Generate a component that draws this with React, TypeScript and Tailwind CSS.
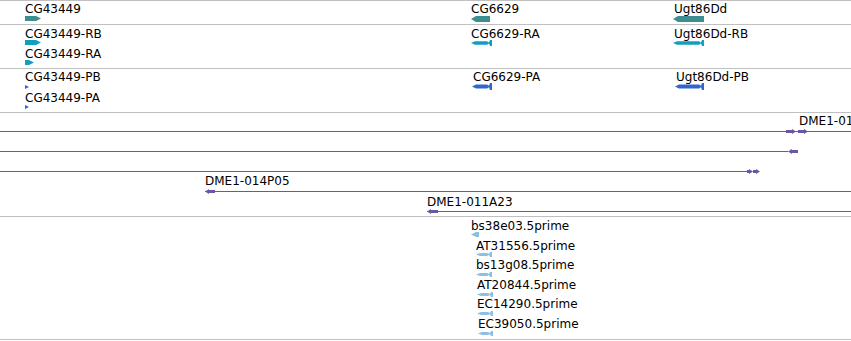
import React from 'react';

type Shape = 'right' | 'left' | 'fish' | 'flag' | 'wedge' | 'boxRight' | 'boxLeft' | 'double';

type Glyph = { shape: Shape; x: number; y: number; w: number; h: number; color: string };
type Label = { text: string; x: number; y: number };
type Span = { x: number; y: number; w: number };

type Track = {
  className: string;
  labels: Label[];
  glyphs: Glyph[];
  spans?: Span[];
};

const GENE = '#3d8e90';
const MRNA = '#0fa0bf';
const CDS = '#3366cc';
const EST = '#8cbfe0';
const CLONE = '#6c56a8';

// polygon outlines for the feature glyphs, in the glyph's own box
function points(shape: Shape, w: number, h: number): string[] {
  const m = h / 2;
  switch (shape) {
    case 'right':
      return [`0,0 ${w - 5},0 ${w},${m} ${w - 5},${h} 0,${h}`];
    case 'left':
      return [`0,${m} 5,0 ${w},0 ${w},${h} 5,${h}`];
    case 'flag':
      return [`0,0 ${w},${m} 0,${h}`];
    case 'wedge':
      return [`0,${m} ${w - 3},0 ${w},0 ${w},${h} ${w - 3},${h}`];
    case 'fish': {
      const t = h * 0.2;
      const b = h * 0.8;
      return [
        `0,${m} 4,${t} ${w - 5},${t} ${w - 3},${h * 0.4} ${w - 2},0 ${w},0 ${w},${h} ${w - 2},${h} ${w - 3},${h * 0.6} ${w - 5},${b} 4,${b}`,
      ];
    }
    case 'boxRight':
      return [`0,1 ${w - 4},1 ${w - 4},0 ${w},${m} ${w - 4},${h} ${w - 4},${h - 1} 0,${h - 1}`];
    case 'boxLeft':
      return [`${w},1 4,1 4,0 0,${m} 4,${h} 4,${h - 1} ${w},${h - 1}`];
    case 'double': {
      const half = Math.floor(w / 2);
      return [
        `0,1 ${half - 4},1 ${half - 4},0 ${half},${m} ${half - 4},${h} ${half - 4},${h - 1} 0,${h - 1}`,
        `${half},1 ${w - 4},1 ${w - 4},0 ${w},${m} ${w - 4},${h} ${w - 4},${h - 1} ${half},${h - 1}`,
      ];
    }
  }
}

function FeatureGlyph({ g }: { g: Glyph }) {
  return (
    <svg
      width={g.w}
      height={g.h}
      viewBox={`0 0 ${g.w} ${g.h}`}
      className="absolute block"
      style={{ left: g.x, top: g.y }}
    >
      {points(g.shape, g.w, g.h).map((p, i) => (
        <polygon key={i} points={p} fill={g.color} />
      ))}
    </svg>
  );
}

const tracks: Track[] = [
  {
    className: 'h-[24px]',
    labels: [
      { text: 'CG43449', x: 25, y: 1 },
      { text: 'CG6629', x: 471, y: 1 },
      { text: 'Ugt86Dd', x: 674, y: 1 },
    ],
    glyphs: [
      { shape: 'right', x: 25, y: 15, w: 16, h: 5, color: GENE },
      { shape: 'left', x: 471, y: 15, w: 19, h: 6, color: GENE },
      { shape: 'left', x: 673, y: 15, w: 31, h: 6, color: GENE },
    ],
  },
  {
    className: 'h-[44px]',
    labels: [
      { text: 'CG43449-RB', x: 25, y: 2 },
      { text: 'CG43449-RA', x: 25, y: 22 },
      { text: 'CG6629-RA', x: 471, y: 2 },
      { text: 'Ugt86Dd-RB', x: 674, y: 2 },
    ],
    glyphs: [
      { shape: 'right', x: 25, y: 15, w: 16, h: 5, color: MRNA },
      { shape: 'right', x: 25, y: 35, w: 9, h: 5, color: MRNA },
      { shape: 'fish', x: 471, y: 15, w: 21, h: 6, color: MRNA },
      { shape: 'fish', x: 673, y: 15, w: 31, h: 6, color: MRNA },
    ],
  },
  {
    className: 'h-[44px]',
    labels: [
      { text: 'CG43449-PB', x: 25, y: 1 },
      { text: 'CG43449-PA', x: 25, y: 22 },
      { text: 'CG6629-PA', x: 473, y: 1 },
      { text: 'Ugt86Dd-PB', x: 676, y: 1 },
    ],
    glyphs: [
      { shape: 'flag', x: 25, y: 16, w: 4, h: 4, color: CDS },
      { shape: 'flag', x: 25, y: 36, w: 4, h: 4, color: CDS },
      { shape: 'fish', x: 472, y: 14, w: 20, h: 7, color: CDS },
      { shape: 'fish', x: 675, y: 14, w: 29, h: 7, color: CDS },
    ],
  },
  {
    className: 'h-[104px]',
    labels: [
      { text: 'DME1-017H02', x: 799, y: 1 },
      { text: 'DME1-014P05', x: 205, y: 61 },
      { text: 'DME1-011A23', x: 427, y: 82 },
    ],
    spans: [
      { x: 0, y: 18, w: 851 },
      { x: 0, y: 38, w: 788 },
      { x: 0, y: 58, w: 747 },
      { x: 205, y: 78, w: 646 },
      { x: 427, y: 98, w: 424 },
    ],
    glyphs: [
      { shape: 'boxRight', x: 786, y: 16, w: 10, h: 5, color: CLONE },
      { shape: 'boxRight', x: 798, y: 16, w: 10, h: 5, color: CLONE },
      { shape: 'boxLeft', x: 788, y: 36, w: 10, h: 5, color: CLONE },
      { shape: 'double', x: 747, y: 56, w: 13, h: 5, color: CLONE },
      { shape: 'boxLeft', x: 205, y: 76, w: 10, h: 5, color: CLONE },
      { shape: 'boxLeft', x: 427, y: 96, w: 11, h: 5, color: CLONE },
    ],
  },
  {
    className: 'h-[123px]',
    labels: [
      { text: 'bs38e03.5prime', x: 471, y: 2 },
      { text: 'AT31556.5prime', x: 476, y: 22 },
      { text: 'bs13g08.5prime', x: 476, y: 41 },
      { text: 'AT20844.5prime', x: 477, y: 61 },
      { text: 'EC14290.5prime', x: 477, y: 80 },
      { text: 'EC39050.5prime', x: 478, y: 100 },
    ],
    glyphs: [
      { shape: 'wedge', x: 471, y: 15, w: 8, h: 5, color: EST },
      { shape: 'fish', x: 476, y: 35, w: 16, h: 5, color: EST },
      { shape: 'fish', x: 476, y: 55, w: 16, h: 5, color: EST },
      { shape: 'fish', x: 477, y: 75, w: 16, h: 5, color: EST },
      { shape: 'fish', x: 477, y: 94, w: 16, h: 5, color: EST },
      { shape: 'fish', x: 478, y: 114, w: 15, h: 5, color: EST },
    ],
  },
];

export default function App() {
  return (
    <div className="w-[851px] h-[341px] bg-white overflow-hidden font-['DejaVu_Sans',sans-serif] text-[12px] leading-[14px] text-black">
      <div className="flex flex-col border-t border-[#c0c0c0]">
        {tracks.map((track, i) => (
          <div
            key={i}
            className={`relative w-full overflow-hidden border-b border-[#c0c0c0] ${track.className}`}
          >
            {/* clone spans */}
            {track.spans?.map((s, j) => (
              <div
                key={j}
                className="absolute h-px bg-[#6c56a8]"
                style={{ left: s.x, top: s.y, width: s.w }}
              />
            ))}
            {track.glyphs.map((g, j) => (
              <FeatureGlyph key={j} g={g} />
            ))}
            {track.labels.map((l, j) => (
              <span
                key={j}
                className="absolute whitespace-nowrap"
                style={{ left: l.x, top: l.y }}
              >
                {l.text}
              </span>
            ))}
          </div>
        ))}
      </div>
    </div>
  );
}
